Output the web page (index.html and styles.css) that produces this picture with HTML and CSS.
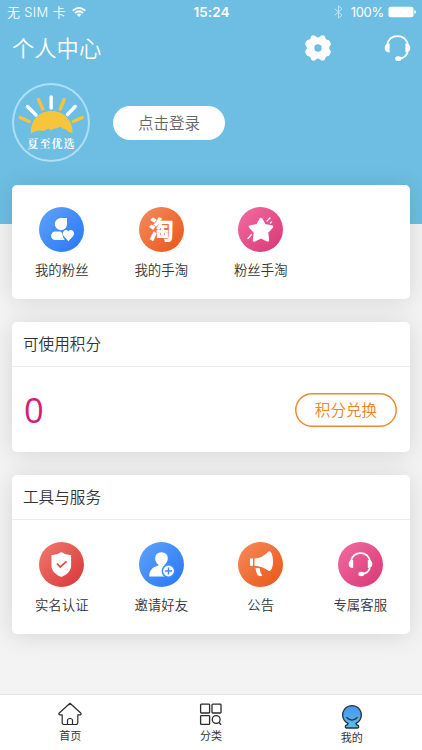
FILE: index.html
```html
<!DOCTYPE html>
<html lang="zh-CN">
<head>
<meta charset="utf-8">
<meta name="viewport" content="width=device-width, initial-scale=1">
<title>个人中心</title>
<link rel="stylesheet" href="styles.css">
</head>
<body>
<svg class="defs" width="0" height="0" aria-hidden="true">
  <symbol id="headset" viewBox="0 0 27 27">
    <path d="M3 10C4.500 4 8.500 1.200 13.500 1.200S22.500 4 24 10M23.600 17C22.500 21 20 23.300 15 23.700" fill="none" stroke="currentColor" stroke-width="1.800"/>
    <path d="M5.600 8.600v8.800C2.300 17.500.7 15.800.7 13s1.600-4.300 4.900-4.400ZM21.400 8.600v8.800c3.300.1 4.900-1.600 4.900-4.400s-1.600-4.300-4.900-4.400Z" fill="currentColor"/>
    <ellipse cx="14.300" cy="23.700" rx="3.100" ry="2.400" fill="currentColor"/>
  </symbol>
</svg>
<div class="screen">
  <header class="hero">
    <div class="status">
      <div class="carrier"><span>无 SIM 卡</span>
        <svg width="14" height="10" viewBox="0 0 14 10" fill="none" stroke="#fff" stroke-width="1.700"><path d="M.7 3.600Q7-1.900 13.300 3.600M2.900 6Q7 2.500 11.100 6"/><path d="M4.700 7.500Q7 5.500 9.300 7.500L7 9.900Z" fill="#fff" stroke="none"/></svg>
      </div>
      <div class="clock">15:24</div>
      <div class="power">
        <svg class="bt" width="9" height="14" viewBox="0 0 9 14" fill="none" stroke="#fff" stroke-width="1"><path d="M.8 3.700 8 10.200 4.500 13.200V.8L8 3.800.8 10.300"/></svg>
        <span>100%</span>
        <svg width="28" height="12" viewBox="0 0 28 12"><rect x=".5" y=".7" width="25" height="10.600" rx="2" fill="#fff"/><path d="M26.400 4q1.600.4 1.600 2t-1.600 2Z" fill="#fff"/></svg>
      </div>
    </div>
    <div class="titlebar">
      <h1>个人中心</h1>
      <div class="actions">
        <svg width="26" height="26" viewBox="-13 -13 26 26" fill="#fff"><path fill-rule="evenodd" d="M-5-12.700-2.900-12.200Q0-8.800 2.900-12.200L5-12.700 7-11.700Q7.100-7.800 10.800-8L12.500-5.500 12.900-3.200Q9.400 0 12.900 3.200L12.300 5.600 10.800 8Q7.100 7.800 7 11.500L5 12.700 2.900 12.200Q0 8.800-2.900 12.200L-5 12.700-7 11.500Q-7.100 7.800-10.800 8L-12.300 5.600-12.900 3.200Q-9.400 0-12.900-3.200L-12.500-5.500-10.800-8Q-7.100-7.800-7-11.700ZM3.700 0a3.700 3.700 0 1 0-7.400 0 3.700 3.700 0 1 0 7.400 0Z"/></svg>
        <svg class="support" width="27" height="27"><use href="#headset"/></svg>
      </div>
    </div>
    <div class="profile">
      <div class="avatar">
        <svg width="66" height="41" viewBox="0 0 66 41">
          <g stroke-width="3.400" stroke-linecap="round">
            <path d="M2.300 23.500 11 27.500M20.500 5.500l4.200 9.500M46.200 5.500 42.300 15M64.200 23.500l-8.700 4" stroke="#f3c43c"/>
            <path d="m9.500 12.500 8.500 8.500M33.200 3v11M57.200 12.500 49.500 20.500" stroke="#fff"/>
          </g>
          <path d="M12.800 39.500C12.800 25.500 21.500 17 33.500 17S54.700 26 54.700 38.500q-4 1-6.500-3-3.500-.2-6-3-3.500 2.400-7 2.300l-2 1.400-3-1.700-4.500 2.600-5-.6Q17 37 12.800 39.500Z" fill="#f5c63c"/>
        </svg>
        <span>夏至优选</span>
      </div>
      <div class="login">点击登录</div>
    </div>
  </header>

  <main>
    <section class="card quick">
      <div class="item"><div class="disc blue">
        <svg width="45" height="45" viewBox="0 0 45 45" fill="#fff"><path d="M28 11v6.300a6.100 6.100 0 1 1-6.100-6.300ZM16.300 24.500h4.500q2.600.3 3 4.200.5 2.500 2 4.300h-9.500a4.250 4.250 0 0 1 0-8.500Z"/><path d="M29.400 34.200 24.700 29c-2.900-4 2.200-8.400 4.700-4.500 2.500-3.900 7.700.5 4.800 4.500Z"/></svg></div><span>我的粉丝</span></div>
      <div class="item"><div class="disc orange"><b class="tao">淘</b></div><span>我的手淘</span></div>
      <div class="item"><div class="disc pink">
        <svg width="45" height="45" viewBox="0 0 45 45" fill="#fff"><path d="m23 12.200 3.500 6.300 7.200 1.200-5 5.500 1 8-6.700-3.400-6.700 3.400 1-8-5-5.500 7.200-1.200Z" stroke="#fff" stroke-width="3" stroke-linejoin="round"/><path d="m29 14 3-3M32.300 16.200l1.200-1.200M10 31.500l3.500-4" fill="none" stroke="#fff" stroke-width="1.200" stroke-linecap="round"/></svg></div><span>粉丝手淘</span></div>
    </section>

    <section class="card points">
      <h2>可使用积分</h2>
      <div class="balance"><strong>0</strong><div class="redeem">积分兑换</div></div>
    </section>

    <section class="card tools">
      <h2>工具与服务</h2>
      <div class="grid">
        <div class="item"><div class="disc red">
          <svg width="45" height="45" viewBox="0 0 45 45"><path d="M22.300 10q4.500 3.500 9.800 3v10.500c0 5.500-4 9-9.800 11.500-5.800-2.500-9.800-6-9.800-11.500V13q5.300.5 9.800-3Z" fill="#fff"/><path d="m18 21.500 3.300 3.500 6.200-5.700" fill="none" stroke="#df4c48" stroke-width="1.800"/></svg></div><span>实名认证</span></div>
        <div class="item"><div class="disc blue">
          <svg width="45" height="45" viewBox="0 0 45 45"><path d="M22.500 10.200c7.800 0 7.800 9.300 3.200 12.300v1l4.300 2v9H10.200c.5-7 3-9 9.100-11v-1c-4.600-3-4.600-12.300 3.200-12.300Z" fill="#fff"/><circle cx="29.500" cy="29" r="6.200" fill="#fff" stroke="#408bf8" stroke-width="1.500"/><path d="M25.900 29h7.200m-3.600-3.600v7.200" stroke="#408bf8" stroke-width="1.500"/></svg></div><span>邀请好友</span></div>
        <div class="item"><div class="disc orange">
          <svg width="45" height="45" viewBox="0 0 45 45" fill="#fff"><path d="M12 16.500h3v7.200h-3ZM16.500 16.500q8-.5 14-7c2.500-1.300 4.500 4 4.500 10s-2 10.500-4.500 9.200q-6-4.700-14-5ZM17.500 25.800l4.500.8q-.4 4 2.200 6.500c.5 1.500-3.800 1.200-4.500.2q-2-3.500-2.200-7.500Z"/></svg></div><span>公告</span></div>
        <div class="item"><div class="disc pink"><svg width="25" height="25"><use href="#headset"/></svg></div><span>专属客服</span></div>
      </div>
    </section>
  </main>

  <nav class="tabs">
    <div class="tab">
      <svg width="24" height="24" viewBox="0 0 24 24" fill="none" stroke="#2b2b2b" stroke-width="1.200" stroke-linejoin="round"><path d="M12 1.300 1 11.200q-.4 1.600 1 1.600h2.200v8q0 1.700 1.700 1.700h12.200q1.700 0 1.700-1.700v-8H22q1.400 0 1-1.600ZM9.500 22v-3.500q0-2 2.500-2t2.500 2V22"/></svg>
      <span>首页</span></div>
    <div class="tab">
      <svg width="24" height="24" viewBox="0 0 24 24" fill="none" stroke="#2b2b2b" stroke-width="1.300"><rect x="1.600" y="2.200" width="9" height="8.800" rx=".7"/><rect x="13" y="2.200" width="9" height="8.800" rx=".7"/><rect x="1.600" y="13.600" width="9" height="8.800" rx=".7"/><circle cx="17.200" cy="17.500" r="3.900"/><path d="m20 20.500 2.200 2.300"/></svg>
      <span>分类</span></div>
    <div class="tab mine">
      <svg width="24" height="24" viewBox="0 0 24 24"><defs><linearGradient id="g" x1="0" y1="0" x2="0" y2="1"><stop stop-color="#4495ee"/><stop offset="1" stop-color="#5ebde9"/></linearGradient></defs><path d="M8 18.400A9.300 9.300 0 1 1 16 18.400Q16 19.900 18.300 20.500 19.400 22.700 17.500 23H6.500Q4.600 22.700 5.700 20.500 8 19.900 8 18.400Z" fill="url(#g)" stroke="#21343f" stroke-width="1.300"/><path d="M6.800 12.500q5.200 5.300 10.400 0" fill="none" stroke="#21343f" stroke-width="1.200" stroke-linecap="round"/></svg>
      <span>我的</span></div>
  </nav>
</div>
</body>
</html>
```
FILE: styles.css
```css
* { box-sizing: border-box; }
body {
  margin: 0;
  font-family: "Noto Sans CJK SC", sans-serif;
  color: #333;
  background: #f3f3f3;
}
svg { display: block; flex: none; }
.defs { position: absolute; }
.screen { height: 750px; display: flex; flex-direction: column; overflow: hidden; }

.hero { flex: none; height: 224px; background: #6dbee2; color: #fff; }
.status {
  height: 24px;
  padding: 0 6px 0 7px;
  display: grid;
  grid-template-columns: 1fr auto 1fr;
  align-items: center;
  font: 13px/24px Inter, "Noto Sans CJK SC", sans-serif;
}
.carrier, .power { display: flex; align-items: center; }
.carrier { gap: 6px; font-weight: 350; letter-spacing: .3px; }
.clock { font-weight: 600; font-size: 13.500px; letter-spacing: .1px; }
.power { justify-content: flex-end; gap: 4px; font-size: 13px; letter-spacing: -.3px; }
.bt { opacity: .6; margin-right: 4px; }

.titlebar {
  height: 48px;
  padding: 0 11px 0 12px;
  display: flex;
  align-items: center;
  justify-content: space-between;
}
h1 { margin: 0; font-size: 22.300px; line-height: 46px; height: 48px; font-weight: 350; }
.actions { display: flex; align-items: center; gap: 53px; }

.profile { display: flex; align-items: center; padding: 11px 0 0 12px; gap: 23px; }
.avatar {
  width: 78px;
  height: 79px;
  border: 2px solid #addff6;
  border-radius: 50%;
  display: flex;
  flex-direction: column;
  align-items: center;
  padding-top: 9px;
}
.avatar span {
  font-family: "Noto Serif CJK SC", "Noto Sans CJK SC", serif;
  font-size: 11px;
  line-height: 16px;
  font-weight: 700;
  letter-spacing: 1.100px;
  margin: 0 -1px 0 0;
}
.login {
  width: 112px;
  height: 34px;
  border-radius: 17px;
  background: #fff;
  color: #666;
  font-size: 15.500px;
  line-height: 33px;
  font-weight: 350;
  text-align: center;
}

main { flex: 1; padding: 0 12px; margin-top: -39.500px; font-weight: 350; }
.card { background: #fff; border-radius: 5px; box-shadow: 0 2px 24px rgba(0, 0, 0, .12); }
.quick { height: 114.500px; display: grid; grid-template-columns: repeat(4, 1fr); padding-top: 22.500px; }
.item { display: flex; flex-direction: column; align-items: center; }
.item span { font-size: 13.400px; line-height: 20px; margin-top: 7px; }
.disc {
  width: 45px;
  height: 45px;
  border-radius: 50%;
  color: #fff;
  display: flex;
  align-items: center;
  justify-content: center;
}
.blue { background: linear-gradient(135deg, #60a3fb, #2676f5); }
.orange { background: linear-gradient(135deg, #f58c5c, #ea5418); }
.pink { background: linear-gradient(135deg, #f26ca2, #d83774); }
.red { background: linear-gradient(135deg, #ef7a6e, #d93538); }
.tao { font-size: 25px; line-height: 43px; height: 45px; font-weight: 900; }

.points { margin-top: 23px; height: 130px; }
h2 {
  margin: 0;
  height: 45px;
  padding-left: 11px;
  border-bottom: 1px solid #ececec;
  font-size: 15.600px;
  line-height: 42px;
  font-weight: 350;
}
.balance { height: 85px; padding: 0 13px 0 12px; display: flex; align-items: center; justify-content: space-between; }
.balance strong { color: #d31f78; font: 400 34.500px/1 "Open Sans", "Noto Sans", sans-serif; padding-top: 1px; }
.redeem {
  width: 102px;
  height: 34px;
  box-shadow: inset 0 0 0 1.500px #ed8a32;
  border-radius: 17px;
  color: #ed8322;
  font-size: 15.600px;
  line-height: 32px;
  text-align: center;
}
.tools { margin-top: 22.500px; height: 159.500px; }
.grid { display: grid; grid-template-columns: repeat(4, 1fr); padding-top: 22.500px; }

.tabs {
  flex: none;
  height: 56px;
  border-top: 1px solid #e5e5e5;
  background: #fff;
  display: grid;
  grid-template-columns: repeat(3, 1fr);
}
.tab { display: flex; flex-direction: column; align-items: center; padding-top: 7px; }
.tab span { font-size: 11px; line-height: 16px; margin-top: .5px; }
.mine { padding-top: 9.500px; }
```
